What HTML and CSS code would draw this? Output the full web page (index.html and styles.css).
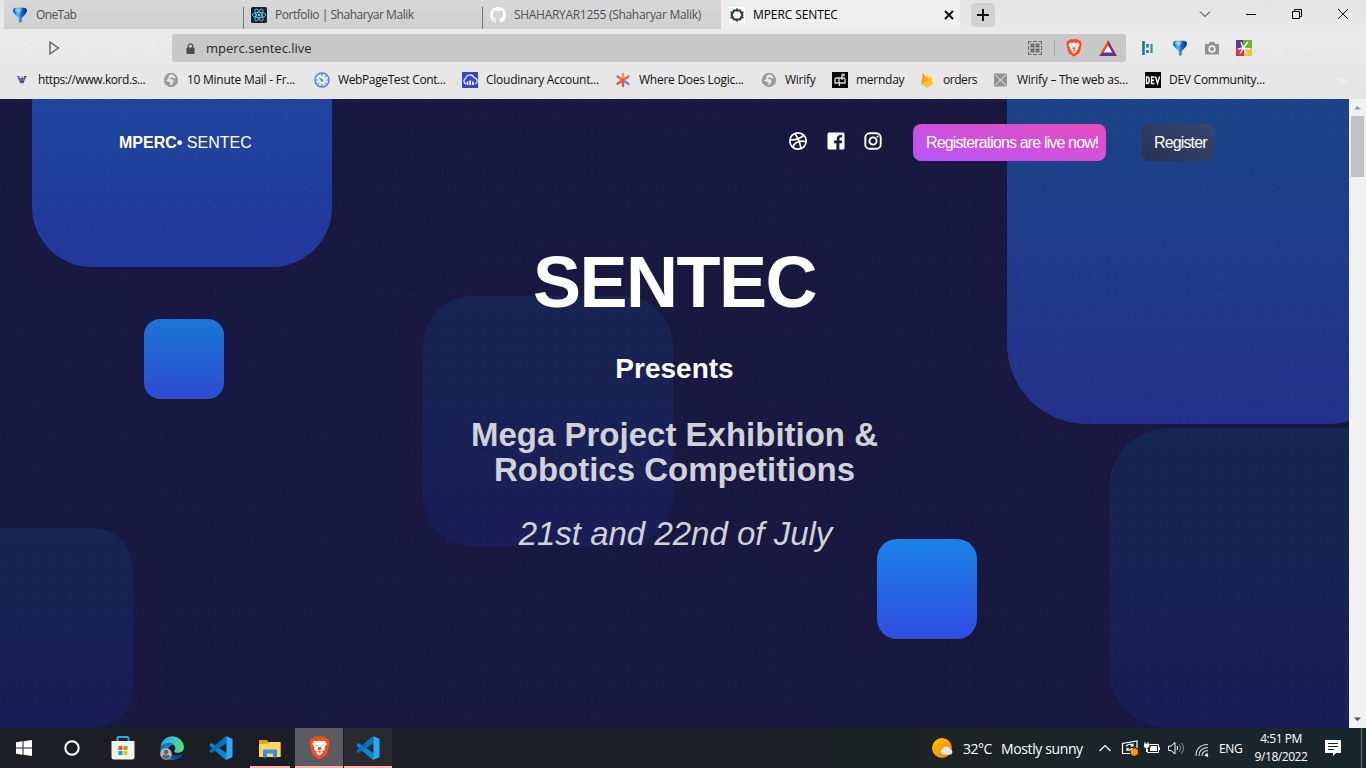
FILE: index.html
```html
<!DOCTYPE html>
<html lang="en">
<head>
<meta charset="utf-8">
<title>MPERC SENTEC</title>
<link rel="stylesheet" href="styles.css">
</head>
<body>
<svg class="defs" width="0" height="0">
  <defs>
    <linearGradient id="gFunnel" x1="0" x2="1"><stop offset="0" stop-color="#0a3f9c"/><stop offset=".35" stop-color="#5fc0f5"/><stop offset=".6" stop-color="#1d6fd0"/><stop offset="1" stop-color="#062a66"/></linearGradient>
    <linearGradient id="gEdge" x1="0" x2="1"><stop offset="0" stop-color="#2a9fe8"/><stop offset=".5" stop-color="#35c4d8"/><stop offset="1" stop-color="#62dd66"/></linearGradient>
    <linearGradient id="gSun" x1="0" x2="1" y2="1"><stop offset="0" stop-color="#ffc400"/><stop offset="1" stop-color="#f47b0c"/></linearGradient>
    <symbol id="funnel" viewBox="0 0 16 16"><path d="M1 4Q1 1 4 .8h8Q15 1 15 4q-.5 2.500-5.300 7V15q-1.700 1.500-3 0v-4Q1.500 6.500 1 4z" fill="url(#gFunnel)"/><path d="M2.500 3.500Q3 1.800 5 1.600h5L7.500 6z" fill="#b5e8ff" opacity=".6"/></symbol>
    <symbol id="globe" viewBox="0 0 16 16"><circle cx="8" cy="8" r="7.200" fill="#999da3"/><path d="M7 2.600c2-.8 5 .8 5.700 3.100-.8 1.300-2 .6-3.200-.1C8.500 5 7 5.700 6.800 6.600c.2 1 2 .5 3.200 1.200 1.400 1-.3 4.700-2.500 5.600-.6-.6.700-1.900-.3-2.900-1-1-3.200-.8-4.500-2.600 1.500.2 2.600-.4 2.600-1.800C5.300 4.500 6.500 3.600 7 2.600z" fill="#e9e9e9"/></symbol>
    <symbol id="lion" viewBox="0 0 20 22"><path d="M5.500 0h9l2 2h2l1 4-2 9.500-1.500 2.500L10 22l-6-4-1.500-2.500L.5 6l1-4h2z" fill="#fb4a1b"/><path d="M5 4.200l2.500.4L10 4l2.500.6 2.500-.4 2 3-2.300 3.400.6 2-2.700 1.500.7 1.400-3.300 2.700-3.300-2.700.7-1.400-2.700-1.500.6-2L3 7.200z" fill="#fff"/><path d="M5.500 7.800l3 .7v1zM14.500 7.800l-3 .7v1zM8.600 10l-.5 2.300L10 13.300l1.900-1-.5-2.300zM7.800 14.500L10 13.800l2.200.7-2.200 1z" fill="#fb4a1b"/></symbol>
    <symbol id="vscode" viewBox="0 0 24 24"><path d="M2.300 7L.6 8.500v1.200L15.500 23l2.200.8V17z" fill="#0b86d0"/><path d="M17.700.2L15.500 1 .6 14.500v1.200L2.300 17l15.400-9.800z" fill="#0672b9"/><path d="M17.700.2L23.500 3v18l-5.800 2.800-1.200-.5.900-1.200V2z" fill="#29a9f2"/></symbol>
  </defs>
</svg>

<header class="browser">
  <div class="tabstrip">
    <div class="tab"><svg class="fav" viewBox="0 0 16 16"><use href="#funnel"/></svg><span class="tab-onetab">OneTab</span></div>
    <div class="tab tab-line"><svg class="fav" viewBox="0 0 16 16"><rect width="16" height="16" rx="1.500" fill="#20232a"/><g fill="none" stroke="#61dafb" stroke-width=".8"><ellipse cx="8" cy="8" rx="6.700" ry="2.600"/><ellipse cx="8" cy="8" rx="6.700" ry="2.600" transform="rotate(60 8 8)"/><ellipse cx="8" cy="8" rx="6.700" ry="2.600" transform="rotate(120 8 8)"/></g><circle cx="8" cy="8" r="1.300" fill="#61dafb"/></svg><span class="tab-portfolio">Portfolio | Shaharyar Malik</span></div>
    <div class="tab tab-line"><svg class="fav" viewBox="0 0 16 16"><path fill="#fff" d="M8 0C3.580 0 0 3.580 0 8c0 3.540 2.290 6.530 5.470 7.590.4.070.55-.17.55-.38 0-.19-.01-.82-.01-1.490-2.010.37-2.530-.49-2.690-.94-.09-.23-.48-.94-.82-1.130-.28-.15-.68-.52-.01-.53.630-.01 1.080.58 1.230.82.720 1.210 1.870.87 2.330.66.070-.52.280-.87.510-1.070-1.780-.2-3.640-.89-3.640-3.950 0-.87.310-1.590.820-2.150-.08-.2-.36-1.020.080-2.120 0 0 .67-.21 2.200.82a7.600 7.600 0 0 1 4 0c1.530-1.040 2.200-.82 2.200-.82.440 1.100.160 1.920.080 2.120.510.560.820 1.270.820 2.150 0 3.070-1.870 3.750-3.650 3.950.290.250.540.730.540 1.480 0 1.070-.01 1.930-.01 2.200 0 .210.150.460.550.380A8.010 8.010 0 0 0 16 8c0-4.420-3.580-8-8-8z"/></svg><span class="tab-github">SHAHARYAR1255 (Shaharyar Malik)</span></div>
    <div class="tab tab-active"><svg class="fav" viewBox="0 0 16 16"><rect width="16" height="16" fill="#fff"/><path d="M5 3.500h6L13.500 8 11 12.500H5L2.500 8z" fill="none" stroke="#27384a" stroke-width="2"/><path d="M8 1.200v2M8 12.800v2M1.500 5l2 1M14.500 5l-2 1M1.500 11l2-1M14.500 11l-2-1" stroke="#27384a" stroke-width="1.500"/></svg><span class="tab-mperc">MPERC SENTEC</span><svg class="tab-close" viewBox="0 0 10 10"><path d="M1 1l8 8M9 1L1 9" stroke="#111" stroke-width="2"/></svg></div>
    <div class="newtab"><svg width="12" height="12" viewBox="0 0 12 12"><path d="M6 0v12M0 6h12" stroke="#111" stroke-width="2"/></svg></div>
    <div class="winctl">
      <svg viewBox="0 0 12 12"><path d="M1 3.500l5 5 5-5" fill="none" stroke="#222"/></svg>
      <svg viewBox="0 0 12 12"><path d="M1 6.500h10" stroke="#000"/></svg>
      <svg viewBox="0 0 12 12"><path d="M1.500 3.500h7v7h-7zM3.500 3.500v-2h7v7h-2" fill="none" stroke="#000"/></svg>
      <svg viewBox="0 0 12 12"><path d="M1 1l10 10M11 1L1 11" stroke="#111"/></svg>
    </div>
  </div>

  <div class="toolbar">
    <div class="navbtns">
      <svg viewBox="0 0 16 16"><path d="M12.500 2.500v11L4 8z"/></svg>
      <svg class="forward" viewBox="0 0 16 16"><path d="M4 2v12l8.500-6z"/></svg>
      <svg viewBox="0 0 16 16"><path d="M13.500 5A6 6 0 1 0 14 9M14 2v4h-4"/></svg>
      <svg viewBox="0 0 16 16"><path d="M2 8l6-5.500L14 8M4 7v7h3v-4h2v4h3V7"/></svg>
      <svg viewBox="0 0 16 16"><path d="M4 2h8v12l-4-3.500L4 14z"/></svg>
    </div>
    <div class="address">
      <svg class="lock" viewBox="0 0 10 12"><rect y="5" x=".5" width="9" height="7" rx="1" fill="#4b4f54"/><path d="M2.500 5.500V3.300a2.500 2.500 0 0 1 5 0v2.200" fill="none" stroke="#4b4f54" stroke-width="1.300"/></svg>
      <span class="url">mperc.sentec.live</span>
      <div class="address-tools">
        <svg width="14" height="14" viewBox="0 0 14 14"><path d="M.5 3.500v-3h3M5 .5h4M10.500.5h3v3M13.500 5v4M13.500 10.500v3h-3M9 13.500H5M3.500 13.500h-3v-3M.5 9V5" fill="none" stroke="#62666a"/><path d="M2.500 2.500h4v4h-4zM7.500 2.500h4v4h-4zM2.500 7.500h4v4h-4zM7.500 7.500h4v4h-4z" fill="#6d7175"/></svg>
        <i class="sep"></i>
        <svg class="shield" width="16" height="18"><use href="#lion"/></svg>
        <svg width="18" height="16" viewBox="0 0 18 16"><path d="M9 0L0 16l5-3L9 6z" fill="#ff4724"/><path d="M9 0l9 16-5-3-4-7z" fill="#9e1f63"/><path d="M0 16h18l-4.500-4h-9z" fill="#662d91"/><path d="M9 5.500l4.300 7H4.700z" fill="#fff"/></svg>
      </div>
    </div>
    <div class="extensions">
      <svg viewBox="0 0 16 16"><path d="M3.500 1v14M7.500 4v3.500M7.500 10v3" stroke="#23788a" stroke-width="2.600" fill="none"/><path d="M11.500 4v9" stroke="#3c93a2" stroke-width="2.300"/></svg>
      <svg viewBox="0 0 16 16"><use href="#funnel"/></svg>
      <svg viewBox="0 0 16 16"><path d="M1 4h3.500L6 1.800h4L11.500 4H15v10.500H1z" fill="#8e9092"/><circle cx="8" cy="9" r="3.800" fill="#efefef"/><circle cx="8" cy="9" r="2.100" fill="#8e9092"/></svg>
      <svg viewBox="0 0 16 16"><path d="M0 0h7v9H0z" fill="#5b3796"/><path d="M7 0h9v8H7z" fill="#6bb52e"/><path d="M0 8h8v8H0z" fill="#ed284c"/><path d="M8 8h8v8H8z" fill="#f7bd36"/><path d="M7 8L5 2M7 8l5-6M7 8l7 1M7 8l4 6M7 8l-3 6M7 8L2 9" stroke="#fff" stroke-width="1.300"/></svg>
      <svg class="faint" viewBox="0 0 16 16"><path d="M3 4h3a2 2 0 1 1 4 0h3v4a2 2 0 1 1 0 3v3H3v-4a2 2 0 1 0 0-3z"/></svg>
      <svg class="faint hollow" viewBox="0 0 16 16"><path d="M2 3h10v3M2 3v10h12V6H3M10 8h4v3h-4z"/></svg>
    </div>
  </div>

  <div class="bookmarks">
    <a><svg viewBox="0 0 16 16"><path d="M3 4h2l1.500 3L8 4l1.500 3L10 4h2.500l-2 4.500L9 12l-1-2-1 2-2-3.500z" fill="#3b3b70"/><path d="M4 5.500h7M5 8h6" stroke="#d9d9ed" stroke-width=".6"/></svg><span>https://www.kord.s...</span></a>
    <a><svg viewBox="0 0 16 16"><use href="#globe"/></svg><span>10 Minute Mail - Fr...</span></a>
    <a><svg viewBox="0 0 16 16"><circle cx="8" cy="8" r="7" fill="#e8eefa" stroke="#4285f4" stroke-width="1.500"/><path d="M8 1.500v2.500M8 12v2.500M1.500 8H4M12 8h2.500M5.500 6L8 8.500M12 4l-1 1M4 12l1-1M12 12l-1-1" stroke="#4285f4" stroke-width="1.200"/><circle cx="8" cy="8.500" r="1.200" fill="#4285f4"/></svg><span>WebPageTest Cont...</span></a>
    <a><svg viewBox="0 0 16 16"><rect width="16" height="16" fill="#3448c5"/><path d="M4 12a3 3 0 0 1-.5-5.500 4.500 4.500 0 0 1 8.600-.7A3.200 3.200 0 0 1 13 12" fill="none" stroke="#fff" stroke-width="1.100"/><path d="M5.500 9.500V13M8.200 8.500V13M11 9.500V13" stroke="#fff" stroke-width="1.700"/></svg><span>Cloudinary Account...</span></a>
    <a><svg viewBox="0 0 16 16"><g stroke-width="2.400" stroke-linecap="round"><path d="M8 8V2" stroke="#f39a3f"/><path d="M8 8L2.500 4.500" stroke="#ee6a3a"/><path d="M8 8l-5.500 3.800" stroke="#ee4f4f"/><path d="M8 8v6" stroke="#cf5175"/><path d="M8 8l5.500-3.500" stroke="#f0604c"/><path d="M10 9.500l3.500 2.500" stroke="#3aa4b5"/></g></svg><span>Where Does Logic...</span></a>
    <a><svg viewBox="0 0 16 16"><use href="#globe"/></svg><span>Wirify</span></a>
    <a><svg viewBox="0 0 16 16"><rect width="16" height="16" fill="#050505"/><path d="M3 11V7.500Q3 6 4.500 6H7v5zM7 11h6V7.500Q13 6 11.500 6H7M10 8V2.500h2v2M7.500 11v3" fill="none" stroke="#ddd" stroke-width="1.300"/></svg><span>mernday</span></a>
    <a><svg viewBox="0 0 16 16"><path d="M2 12L4 1l3 4 1.500-2 1.500 3 2-2 2 8-6 4z" fill="#ffc52d"/><path d="M2 12L4 1l3 4 3 3z" fill="#f9a11b"/></svg><span>orders</span></a>
    <a><svg viewBox="0 0 16 16"><rect x="1" y="1.500" width="13" height="13" fill="#929292"/><path d="M2 2.500l11 11M13 2.500l-11 11" stroke="#eee"/></svg><span>Wirify – The web as...</span></a>
    <a><svg viewBox="0 0 16 16"><rect width="16" height="16" fill="#080808"/><path d="M1.500 5v6.500h1q1.500 0 1.500-2V7q0-2-1.500-2zM9.500 5H6.500v6.500h3M6.500 8.200h2.500M10.500 4.500l2 7 2-7" fill="none" stroke="#fff" stroke-width="1.400"/></svg><span>DEV Community...</span></a>
    <b class="more">»</b>
  </div>
</header>

<main class="viewport">
  <section class="hero">
    <i class="blob b1"></i><i class="blob b2"></i><i class="blob b3"></i><i class="blob b6"></i><i class="blob b7"></i>
    <i class="dots"></i>
    <i class="blob b4"></i><i class="blob b5"></i>
    <nav class="nav">
      <div class="logo"><b>MPERC•</b> SENTEC</div>
      <div class="social">
        <svg viewBox="0 0 20 20"><g fill="none" stroke="#fff" stroke-width="1.700"><circle cx="10" cy="10" r="8.200"/><path d="M6.800 2.500c3 4 5 8.300 6.200 14.800M2 8.800c5.500.3 10-.8 13.500-4.500M4.500 16c3-5.200 7.500-6.800 13.500-5.200"/></g></svg>
        <svg viewBox="0 0 20 20"><path d="M3 1.500h14A1.500 1.500 0 0 1 18.500 3v14a1.500 1.500 0 0 1-1.500 1.500h-3.600v-6.300h2.400l.4-2.700h-2.800V8c0-.9.400-1.500 1.500-1.500h1.300V4.200c-3.400-.6-5.300.6-5.300 3.400v1.900H8.100v2.700h2.300v6.300H3A1.500 1.500 0 0 1 1.500 17V3A1.500 1.500 0 0 1 3 1.500z" fill="#fff"/></svg>
        <svg viewBox="0 0 20 20"><g fill="none" stroke="#fff"><rect x="2.300" y="2.300" width="15.400" height="15.400" rx="4.300" stroke-width="1.900"/><circle cx="10" cy="10" r="3.600" stroke-width="1.900"/></g><circle cx="14.600" cy="5.500" r="1.100" fill="#fff"/></svg>
      </div>
      <a class="btn btn-pink">Registerations are live now!</a>
      <a class="btn btn-dark">Register</a>
    </nav>
    <div class="copy">
      <h1>SENTEC</h1>
      <h3>Presents</h3>
      <h2>Mega Project Exhibition &amp;<br>Robotics Competitions</h2>
      <p>21st and 22nd of July</p>
    </div>
  </section>
  <aside class="scrollbar">
    <svg viewBox="0 0 17 17"><path d="M5 10.500h7L8.500 7z" fill="#9a9a9a"/></svg>
    <i class="thumb"></i>
    <svg class="down" viewBox="0 0 17 17"><path d="M5 6.500h7L8.500 10z" fill="#505050"/></svg>
  </aside>
</main>

<footer class="taskbar">
  <div class="apps">
    <span><svg width="16" height="16" viewBox="0 0 16 16"><path d="M0 2.200L6.500 1.300v6.200H0zM7.500 1.200L16 0v7.500H7.500zM0 8.500h6.500v6.200L0 13.800zM7.500 8.500H16V16l-8.500-1.200z" fill="#fff"/></svg></span>
    <span><svg width="16" height="16" viewBox="0 0 16 16"><circle cx="8" cy="8" r="6.700" fill="none" stroke="#fff" stroke-width="2"/></svg></span>
    <span><svg width="24" height="24" viewBox="0 0 24 24"><path d="M6.500 6V2q0-1 1-1h9q1 0 1 1v4" fill="none" stroke="#26a9e8" stroke-width="2"/><path d="M.5 5h23v16q0 2.500-2.500 2.500H3Q.5 23.500.5 21z" fill="#f2f2f2"/><path d="M7.500 10h4v4h-4z" fill="#f25022"/><path d="M12.500 10h4v4h-4z" fill="#7fba00"/><path d="M7.500 15h4v4h-4z" fill="#00a4ef"/><path d="M12.500 15h4v4h-4z" fill="#ffb900"/></svg></span>
    <span><svg width="24" height="24" viewBox="0 0 24 24"><path d="M.5 11A11.800 11.800 0 0 1 24 11c0 5.500-6 7-9.500 5-1-1 1-1.500.8-4C15 9 12 7 8.500 7.200 4.500 7.500 1.500 9.500.5 11z" fill="url(#gEdge)"/><path d="M.2 13C1 9.500 4.500 7.200 8.500 7.200c2 0 4 .6 5.300 1.800C9.500 9 7.500 12 8 15.500c.5 4 4 7 7.500 7.800C7 26 0 20 .2 13z" fill="#1878ca"/><path d="M10 11c-2.500 3.500-.5 7 3.500 8.300 3.500 1 7 .2 9-1.300.5-.3.800.2.500.6-2 3-5 4.800-8 4.900C11 23 8 19.500 8 15.500c0-2 .7-3.500 2-4.500z" fill="#0e4f96"/><circle cx="6" cy="18" r="5.800" fill="#b7b9bb"/><circle cx="6" cy="16" r="2.300" fill="#626569"/><path d="M2 21q0-2.500 4-2.500t4 2.500q-4 4-8 0z" fill="#626569"/></svg></span>
    <span><svg width="24" height="24"><use href="#vscode"/></svg></span>
    <span class="running folder"><svg width="22" height="19" viewBox="0 0 22 19"><path d="M0 1h8l2 2.500h11.500V18H0z" fill="#e3a00b"/><path d="M0 5l9-.5 1.500-1.500h11v15H0z" fill="#ffd75e"/><path d="M4 18.500v-7q0-1 1-1h12q1 0 1 1v7h-4v-4H8v4z" fill="#3591d9"/></svg></span>
    <span class="running active"><svg width="21" height="24"><use href="#lion"/></svg></span>
    <span class="running open"><svg width="24" height="24"><use href="#vscode"/></svg></span>
  </div>
  <div class="tray">
    <svg class="weather" viewBox="0 0 22 20"><circle cx="10" cy="10" r="10" fill="url(#gSun)"/><path d="M11 16.500a3 3 0 0 1 0-5.800 4 4 0 0 1 7.500.8 2.700 2.700 0 0 1 .5 5z" fill="#dce9fa"/></svg>
    <span class="temp">32°C</span><span class="sunny">Mostly sunny</span>
    <svg class="i-up" width="12" height="12" viewBox="0 0 12 12"><path d="M.5 9L6 3.500 11.500 9" fill="none" stroke="#fff" stroke-width="1.200"/></svg>
    <svg class="i-sync" width="18" height="18" viewBox="0 0 18 18"><path d="M9 14.500H1.500v-10L16 2v7" fill="none" stroke="#fff" stroke-width="1.200"/><path d="M5.500 7.500a3.500 3.500 0 0 1 6-1M12 4.500v2.500H9.500M11 9a3.500 3.500 0 0 1-5 1.500M6 12V9.500h2" fill="none" stroke="#fff" stroke-width="1.200"/><circle cx="13.300" cy="13" r="3.700" fill="#ff9500"/></svg>
    <svg class="i-bat" width="16" height="12" viewBox="0 0 16 12"><path d="M5.500 2.500h9v8h-11V7M15.500 5v3M2.500 6v4" fill="none" stroke="#fff"/><path d="M7 4h6v5H6V6z" fill="#fff"/><path d="M0 2h5v2L3.500 6h-2L0 4zM1 0v2M4 0v2" fill="#fff" stroke="#fff" stroke-width=".8"/></svg>
    <svg class="i-vol" width="17" height="14" viewBox="0 0 17 14"><path d="M.6 5v4.500h2.500L7 13V1.500L3.100 5z" fill="none" stroke="#fff"/><path d="M9 5q1.500 2 0 4" fill="none" stroke="#fff"/><path d="M11.300 3.500q3 3.700 0 7.400M13.500 2q4 5 0 10.500" fill="none" stroke="#87939a"/></svg>
    <svg class="i-wifi" width="14" height="14" viewBox="0 0 14 14"><g fill="none" stroke="#d7dee1" stroke-width="1.100"><path d="M1 13Q1 2 13 1.500M4 13Q4 5 13 4.500M7 13q0-5 6-5.500M10 13q0-2 3-2.500"/></g><circle cx="12" cy="12.500" r="1.200" fill="#fff"/></svg>
    <span class="lang">ENG</span>
    <div class="clock"><span>4:51 PM</span><span>9/18/2022</span></div>
    <svg class="i-note" width="16" height="16" viewBox="0 0 16 16"><path d="M0 0h16v13h-5l-3 3v-3H0z" fill="#fff"/><path d="M3 3.500h10M3 6.500h10M3 9.500h6" stroke="#1a272d"/></svg>
    <i class="peek"></i>
  </div>
</footer>
</body>
</html>
```
FILE: styles.css
```css
* { box-sizing: border-box; }
body { margin: 0; width: 1366px; height: 768px; overflow: hidden; display: flex; flex-direction: column; font-family: "Open Sans", "Noto Sans", sans-serif; font-size: 12px; }
svg { display: block; flex: none; }
.defs { position: absolute; }
span { white-space: nowrap; }

/* browser chrome */
.browser { height: 99px; flex: none; background: linear-gradient(#e3e3e3, #ebebeb 35%, #e5e5e5); }
.tabstrip { height: 30px; display: flex; padding-left: 4px; }
.tab { width: 239px; height: 29px; display: flex; align-items: center; gap: 8px; padding-left: 8px; background: linear-gradient(#d8d8d8, #cfcfcf); color: #505050; border-radius: 3px 3px 0 0; letter-spacing: -.3px; }
.tab-onetab { letter-spacing: -.65px; }
.tab-portfolio { letter-spacing: -.46px; }
.tab-line { background: linear-gradient(#777, #777) 0 7px / 1px 22px no-repeat, linear-gradient(#d8d8d8, #cfcfcf); }
.tab-active { height: 30px; background: #eee; color: #000; padding-bottom: 1px; letter-spacing: -.1px; }
.fav { width: 16px; height: 16px; }
.tab-active .tab-mperc { flex: 1; }
.tab-close { width: 10px; height: 10px; margin-right: 6px; }
.newtab { width: 24px; height: 24px; margin: 3px 0 0 11px; background: #d2d2d2; border-radius: 4px; display: grid; place-items: center; }
.winctl { flex: 1; display: flex; gap: 34px; align-items: center; justify-content: flex-end; padding: 0 17px 2px 0; }
.winctl svg { width: 12px; height: 12px; }

.toolbar { height: 36px; display: flex; align-items: center; }
.navbtns { width: 172px; padding-left: 14px; display: flex; gap: 16px; }
.navbtns svg { width: 16px; height: 16px; fill: none; stroke: #ededed; stroke-width: 1.4; }
.navbtns .forward { stroke: #5d6166; }
.address { width: 954px; height: 28px; padding: 0 9px 0 14px; border-radius: 3px; background: #c8c8c8; display: flex; align-items: center; }
.lock { width: 9px; height: 11px; margin-right: 11px; }
.url { font-size: 13px; flex: 1; color: #26282b; }
.address-tools { display: flex; align-items: center; }
.sep { width: 1px; height: 16px; background: #a5adb5; margin: 0 11px 0 12px; }
.shield { margin-right: 17px; }
.extensions { display: flex; gap: 16px; padding-left: 14px; }
.extensions svg { width: 16px; height: 16px; }
.faint { fill: #ececec; }
.hollow { fill: none; stroke: #ececec; }

.bookmarks { height: 28px; padding-left: 14px; display: grid; grid-template-columns: 149px 151px 148px 153px 146px 71px 87px 74px 152px 1fr auto; align-items: center; color: #111; }
.bookmarks a { display: flex; align-items: center; gap: 8px; letter-spacing: -.26px; }
.bookmarks a:first-child { letter-spacing: -.42px; }
.bookmarks a:nth-child(3) { letter-spacing: -.38px; }
.bookmarks a:nth-child(8) { letter-spacing: -.45px; }
.bookmarks svg { width: 16px; height: 16px; }
.bookmarks span { margin-top: -2px; }
.more { color: #f0f0f0; font-size: 15px; padding-right: 19px; margin-top: -3px; }

/* page */
.viewport { flex: 1; display: flex; min-height: 0; }
.hero { position: relative; width: 1349px; overflow: hidden; background: #181840; color: #fff; font-family: "Liberation Sans", Arial, sans-serif; }
.blob { position: absolute; }
.b1 { left: 32px; top: -132px; width: 300px; height: 300px; border-radius: 60px; background: linear-gradient(#1b509f, #23379a); }
.b2 { left: 1007px; top: -75px; width: 400px; height: 400px; border-radius: 80px; background: linear-gradient(#1a4886, #23318b); }
.b3 { left: 423px; top: 197px; width: 250px; height: 250px; border-radius: 50px; background: linear-gradient(#172552, #191e56); }
.b4 { left: 144px; top: 220px; width: 80px; height: 80px; border-radius: 16px; background: linear-gradient(#1c76d8, #2c4ad0); }
.b5 { left: 877px; top: 440px; width: 100px; height: 100px; border-radius: 20px; background: linear-gradient(#1c82e8, #2f4de0); }
.b6 { left: 1109px; top: 329px; width: 300px; height: 300px; border-radius: 60px; background: linear-gradient(#172552, #191e56); }
.b7 { left: -67px; top: 429px; width: 200px; height: 200px; border-radius: 40px; background: linear-gradient(#172552, #191e56); }
.dots { position: absolute; inset: 0; background: radial-gradient(circle at 50% 50%, rgba(255,255,255,.038) 0 .8px, transparent 1.3px) 8.500px 9.500px / 17.960px 17.710px; }

.nav { position: relative; height: 37px; margin-top: 25px; display: flex; align-items: center; font-size: 16px; }
.logo { width: 670px; margin-left: 119px; }
.social { display: flex; gap: 17.500px; width: 124px; }
.social svg { width: 20px; height: 20px; margin-top: -3px; margin-left: -1px; }
.social svg + svg { margin-left: 0; }
.social svg:last-child { margin-left: -.5px; }
.btn { height: 37px; line-height: 37px; padding-left: 13px; border-radius: 8px; letter-spacing: -.86px; white-space: nowrap; }
.btn-pink { width: 193px; background: linear-gradient(to top right, #b755fa, #e84dbd); }
.btn-dark { width: 74px; margin-left: 35px; background: linear-gradient(to top right, #27334e, #364673); }

.copy { position: relative; text-align: center; padding-top: 81px; }
h1, h2, h3, p { margin: 0; }
h1 { font-size: 72px; line-height: 80px; letter-spacing: -1.5px; }
h3 { font-size: 28px; line-height: 32px; margin-top: 31px; }
h2 { font-size: 33px; line-height: 35px; margin-top: 32px; color: #d1d1d9; }
p { font-size: 33px; line-height: 38px; margin-top: 28px; padding-left: 2px; font-style: italic; color: #d1d1d9; }

.scrollbar { width: 17px; background: #f1f1f1; display: flex; flex-direction: column; align-items: center; }
.scrollbar svg { width: 17px; height: 17px; }
.thumb { width: 13px; height: 61px; background: #c1c1c1; }
.down { margin-top: auto; }

/* taskbar */
.taskbar { height: 40px; flex: none; display: flex; justify-content: space-between; color: #fff; background: linear-gradient(90deg, #1d1e24, #1c1d26 45%, #1d2424 70%, #18272e); }
.apps { display: flex; }
.apps span { width: 48px; display: grid; place-items: center; }
.apps span:nth-child(2) { width: 48px; }
.apps span:nth-child(3) { width: 53px; }
.apps span:nth-child(4) { width: 46px; }
.apps span:nth-child(5) { width: 52px; }
.apps .running { border-bottom: 2px solid #ffb3ae; padding-top: 2px; }
.apps .folder { width: 40px; margin: 0 5px 0 3px; }
.apps .active { width: 48px; background: #5b5c61; }
.apps .open { width: 48px; margin-left: 1px; background: #292a30; }
.tray { display: flex; align-items: center; }
.weather { width: 22px; height: 20px; margin-right: 9px; }
.temp { font-size: 14px; width: 38px; letter-spacing: -.5px; }
.sunny { font-size: 14px; width: 98px; letter-spacing: -.38px; }
.i-up { margin-right: 10px; }
.i-sync { margin-right: 5px; }
.i-bat { margin-right: 8px; }
.i-vol { margin-right: 10px; }
.i-wifi { margin-right: 10px; margin-top: 3px; }
.lang { width: 35px; letter-spacing: -.3px; }
.clock { width: 54px; display: flex; flex-direction: column; align-items: center; line-height: 18px; letter-spacing: -.45px; }
.i-note { margin-left: 17px; }
.peek { width: 1px; height: 40px; background: #697378; margin: 0 4px 0 20px; }
```
